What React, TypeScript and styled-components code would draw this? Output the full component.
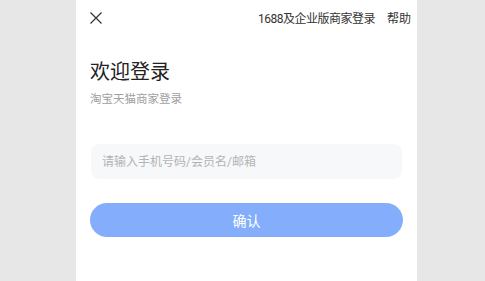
import styled, { createGlobalStyle } from 'styled-components'

const GlobalStyle = createGlobalStyle`
  html, body {
    margin: 0;
    padding: 0;
    background: #e7e7e7;
    font-family: Roboto, "Noto Sans CJK SC", sans-serif;
  }
`

function CloseIcon() {
  return (
    <svg width="14" height="14" viewBox="0 0 14 14" fill="none">
      <path d="M1.5 1.5L12.5 12.5M12.5 1.5L1.5 12.5" stroke="#333" strokeWidth="1.2" />
    </svg>
  )
}

export default function App() {
  return (
    <>
      <GlobalStyle />
      <Page>
        <Panel>
          <TopBar>
            <CloseButton>
              <CloseIcon />
            </CloseButton>
            <TopLinks>
              <TopLink $tight>1688及企业版商家登录</TopLink>
              <TopLink>帮助</TopLink>
            </TopLinks>
          </TopBar>
          <Title>欢迎登录</Title>
          <Subtitle>淘宝天猫商家登录</Subtitle>
          <Input placeholder="请输入手机号码/会员名/邮箱" />
          <Confirm>确认</Confirm>
        </Panel>
      </Page>
    </>
  )
}

const Page = styled.div`
  display: flex;
  justify-content: center;
  padding-left: 8px;
  min-height: 281px;
`

const Panel = styled.div`
  width: 341px;
  background: #fff;
  padding: 0 14px;
  box-sizing: border-box;
  display: flex;
  flex-direction: column;
`

const TopBar = styled.div`
  display: flex;
  align-items: center;
  justify-content: space-between;
  height: 35px;
`

const CloseButton = styled.div`
  display: flex;
  align-items: center;
  margin-left: -1px;
`

const TopLinks = styled.div`
  display: flex;
  gap: 12px;
  margin-right: -8px;
`

const TopLink = styled.span<{ $tight?: boolean }>`
  font-size: 12px;
  color: #333;
  letter-spacing: ${(p) => (p.$tight ? '-0.5px' : '0')};
`

const Title = styled.div`
  margin-top: 23px;
  font-size: 20px;
  line-height: 28px;
  color: #222;
`

const Subtitle = styled.div`
  margin-top: 5px;
  font-size: 11.5px;
  line-height: 16px;
  color: #a0a0a0;
`

const Input = styled.input`
  margin: 37px 1px 0 1px;
  height: 35px;
  border: none;
  outline: none;
  border-radius: 8px;
  background: #f7f8fa;
  padding: 0 11px;
  font-size: 12px;
  font-family: inherit;
  color: #333;
  &::placeholder {
    color: #b4b4b4;
  }
`

const Confirm = styled.button`
  margin-top: 24px;
  height: 34px;
  border: none;
  border-radius: 17px;
  background: #84aefc;
  color: #fff;
  font-size: 14px;
  font-family: inherit;
`
